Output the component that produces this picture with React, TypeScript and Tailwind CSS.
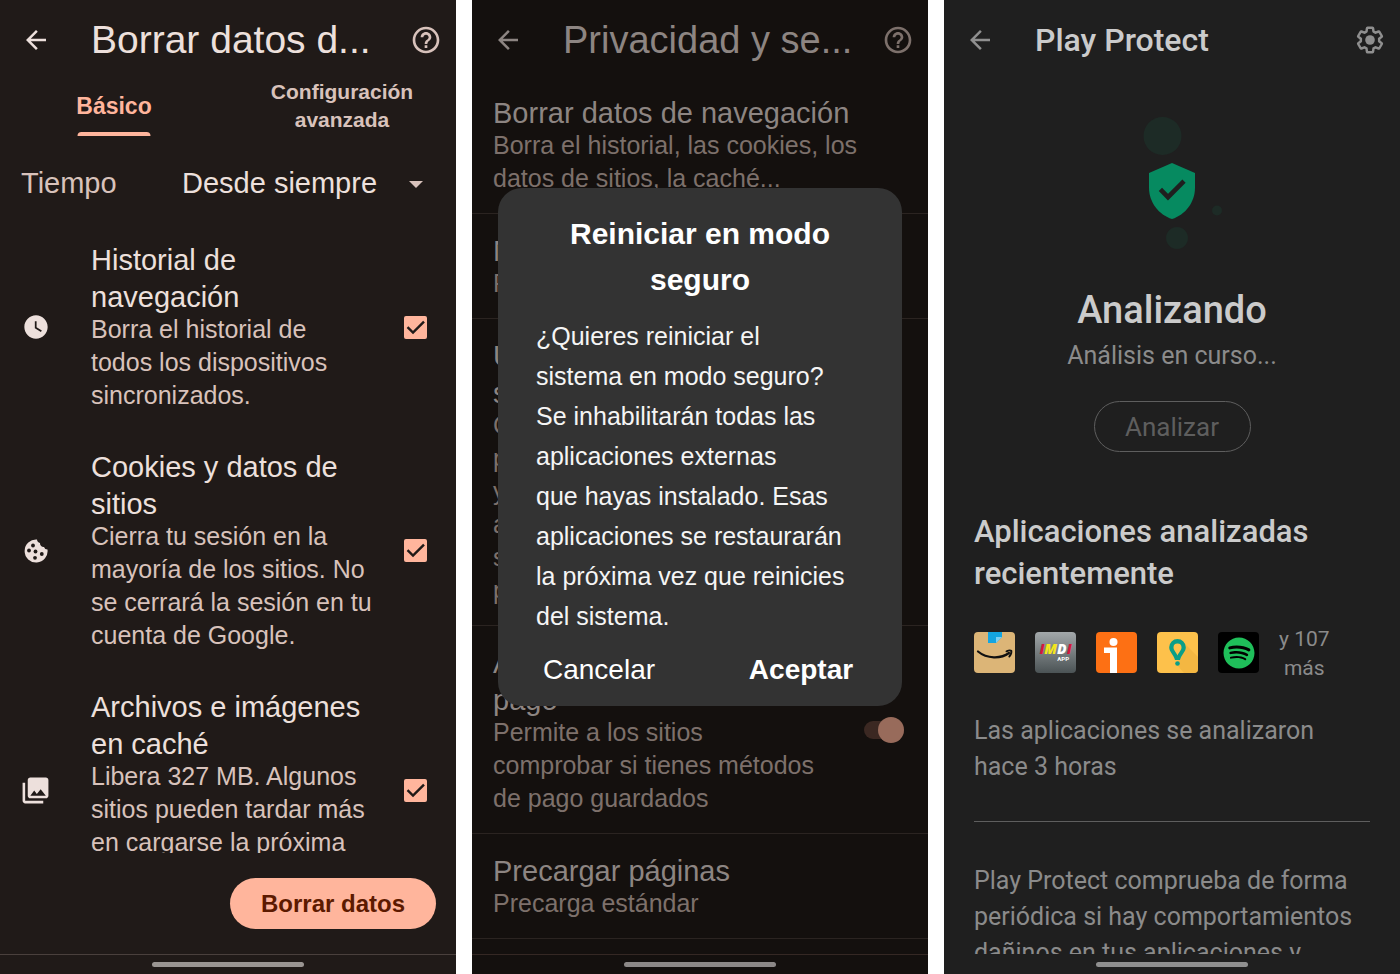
import { useId, useState } from 'react';
import type { ReactNode } from 'react';
import { MdArrowBack, MdHelpOutline, MdPhotoLibrary, MdWatchLater } from 'react-icons/md';
import { FaSpotify } from 'react-icons/fa';

const SANS = "font-['Liberation_Sans',Arial,sans-serif]";
const ROBOTO = "font-['Roboto',sans-serif]";

interface ClearOption {
  id: string;
  title: string;
  text: string;
  icon: ReactNode;
}

function CookieIcon() {
  return (
    <svg viewBox="0 0 24 24" className="size-6" aria-hidden="true">
      <path
        fill="currentColor"
        d="M13 .6A11.500 11.500 0 1 0 23.500 10.500 3.600 3.600 0 0 1 20 8a3.700 3.700 0 0 1-4-4A3.700 3.700 0 0 1 13 .6z"
      />
      <g fill="#201a18">
        <circle cx="9" cy="6.500" r="1.900" />
        <circle cx="5" cy="11.500" r="1.900" />
        <circle cx="11.500" cy="12.500" r="1.900" />
        <circle cx="17.800" cy="15" r="1.900" />
        <circle cx="11" cy="18.800" r="1.900" />
      </g>
    </svg>
  );
}

const CLEAR_OPTIONS: ClearOption[] = [
  {
    id: 'history',
    title: 'Historial de\nnavegación',
    text: 'Borra el historial de\ntodos los dispositivos\nsincronizados.',
    icon: <MdWatchLater size={28} />,
  },
  {
    id: 'cookies',
    title: 'Cookies y datos de\nsitios',
    text: 'Cierra tu sesión en la\nmayoría de los sitios. No\nse cerrará la sesión en tu\ncuenta de Google.',
    icon: <CookieIcon />,
  },
  {
    id: 'cache',
    title: 'Archivos e imágenes\nen caché',
    text: 'Libera 327 MB. Algunos\nsitios pueden tardar más\nen cargarse la próxima\nvez que los visites.',
    icon: <MdPhotoLibrary size={31} />,
  },
];

function NavBar({ line, pill }: { line: string; pill: string }) {
  return (
    <div className={`h-5 shrink-0 border-t flex items-center justify-center ${line}`}>
      <span className={`w-[152px] h-[5px] rounded-full ${pill}`} />
    </div>
  );
}

function Header({ title, titleClass, color, action }: { title: string; titleClass: string; color: string; action: ReactNode }) {
  return (
    <header className={`h-[76px] shrink-0 pt-1 pl-[21px] pr-3.5 flex items-center ${color}`}>
      <button type="button" aria-label="Atrás" className="w-[70px] shrink-0">
        <MdArrowBack size={30} />
      </button>
      <h1 className={`flex-1 whitespace-nowrap ${titleClass}`}>{title}</h1>
      {action}
    </header>
  );
}

function HelpButton({ color }: { color: string }) {
  return (
    <button type="button" aria-label="Ayuda" className={color}>
      <MdHelpOutline size={32} />
    </button>
  );
}

function Tick({ checked, onChange, labelledBy }: { checked: boolean; onChange: () => void; labelledBy: string }) {
  return (
    <span className="grid size-[23px] shrink-0">
      <input
        type="checkbox"
        aria-labelledby={labelledBy}
        checked={checked}
        onChange={onChange}
        className="col-start-1 row-start-1 appearance-none size-[23px] rounded-xs border-2 border-[#ffb59c] checked:bg-[#ffb59c]"
      />
      {checked && (
        <svg viewBox="0 0 23 23" className="col-start-1 row-start-1 pointer-events-none" fill="none" stroke="#201a18" strokeWidth="2.4">
          <path d="M3.5 11.2 9 16.5 20 5.6" />
        </svg>
      )}
    </span>
  );
}

function ClearDataScreen() {
  const [checked, setChecked] = useState<Record<string, boolean>>({ history: true, cookies: true, cache: true });

  return (
    <section className={`min-w-0 flex flex-col overflow-hidden bg-[#201a18] ${SANS}`}>
      <Header
        title="Borrar datos d..."
        titleClass="text-[39px]"
        color="text-[#ede0dc]"
        action={<HelpButton color="text-[#d8c2bb]" />}
      />

      <div role="tablist" className="grid grid-cols-2 h-15 shrink-0 font-bold text-center">
        <button type="button" role="tab" aria-selected="true" className="relative text-[23px] text-[#ffb59c]">
          Básico
          <span className="absolute bottom-0 left-1/2 -translate-x-1/2 w-[73px] h-1 rounded-t-full bg-[#ffb59c]" />
        </button>
        <button type="button" role="tab" aria-selected="false" className="text-[21px]/[28px] text-[#d8c2bb]">
          Configuración<br />avanzada
        </button>
      </div>

      <div className="h-24 shrink-0 pl-[21px] pr-[33px] flex items-center text-[29px]">
        <label htmlFor="range" className="w-[161px] text-[#d8c2bb]">Tiempo</label>
        <div className="relative flex-1 flex items-center">
          <select id="range" className="appearance-none w-full bg-transparent text-[#ede0dc]">
            <option>Desde siempre</option>
            <option>Última hora</option>
            <option>Últimas 24 horas</option>
          </select>
          <svg viewBox="0 0 14 7" className="absolute right-0 w-3.5 h-[7px] pointer-events-none" fill="#d8c2bb">
            <path d="M0 0h14L7 7z" />
          </svg>
        </div>
      </div>

      <ul className="flex-1 min-h-0 overflow-hidden pt-2.5 flex flex-col gap-[37px]">
        {CLEAR_OPTIONS.map((o) => (
          <li key={o.id} className="shrink-0 flex items-center pr-[29px]">
            <span className="w-[91px] pr-5 shrink-0 flex justify-center text-[#ede0dc]">{o.icon}</span>
            <div className="flex-1 min-w-0 whitespace-pre-line">
              <h2 id={`opt-${o.id}`} className="text-[29px]/[37px] text-[#ede0dc]">{o.title}</h2>
              <p className="-mt-[3px] text-[25px]/[33px] text-[#d8c2bb]">{o.text}</p>
            </div>
            <Tick
              labelledBy={`opt-${o.id}`}
              checked={checked[o.id]}
              onChange={() => setChecked((prev) => ({ ...prev, [o.id]: !prev[o.id] }))}
            />
          </li>
        ))}
      </ul>

      <div className="h-[101px] shrink-0 pr-5 flex items-center justify-end">
        <button type="button" className="h-[51px] px-[31px] rounded-full bg-[#ffb59c] text-[24px] font-bold text-[#5c1a00]">
          Borrar datos
        </button>
      </div>
      <NavBar line="border-[#4a403d]" pill="bg-[#9a9592]" />
    </section>
  );
}

function Setting({ title, children, control }: { title: ReactNode; children: ReactNode; control?: ReactNode }) {
  return (
    <li className="shrink-0 pt-[19px] pb-[18px] px-[21px] border-b border-[#2b2421] flex items-center">
      <div className="flex-1">
        <h2 className="text-[29px]/[37px] text-[#8d8582]">{title}</h2>
        <p className="-mt-[3px] text-[25px]/[33px] text-[#7d706b]">{children}</p>
      </div>
      {control}
    </li>
  );
}

function SafeModeDialog() {
  return (
    <div className="absolute inset-0 pt-[188px] px-[26px]">
      <div role="dialog" aria-labelledby="safe-title" className="rounded-3xl bg-[#333333] pt-[23px] pb-4 text-white">
        <h2 id="safe-title" className="text-center text-[30px]/[46px] font-bold">
          Reiniciar en modo<br />seguro
        </h2>
        <p className="mt-[13px] pl-[38px] pr-6 text-[25px]/[40px] text-[#f5f5f5]">
          ¿Quieres reiniciar el<br />sistema en modo seguro?<br />Se inhabilitarán todas las<br />
          aplicaciones externas<br />que hayas instalado. Esas<br />aplicaciones se restaurarán<br />
          la próxima vez que reinicies<br />del sistema.
        </p>
        <div className="mt-3.5 grid grid-cols-2 text-[28px]/[40px]">
          <button type="button">Cancelar</button>
          <button type="button" className="font-bold">Aceptar</button>
        </div>
      </div>
    </div>
  );
}

function PrivacyScreen() {
  const [payments, setPayments] = useState(true);

  return (
    <section className={`relative min-w-0 flex flex-col overflow-hidden bg-[#14100e] ${SANS}`}>
      <Header
        title="Privacidad y se..."
        titleClass="text-[38px]"
        color="text-[#8d8582]"
        action={<HelpButton color="text-[#7d706b]" />}
      />
      <ul className="flex-1 min-h-0 overflow-hidden flex flex-col">
        <Setting title="Borrar datos de navegación">
          Borra el historial, las cookies, los<br />datos de sitios, la caché...
        </Setting>
        <Setting title="Navegación segura">Protección estándar</Setting>
        <Setting title={<>Usar siempre conexiones<br />seguras</>}>
          Cambia a HTTPS en las<br />páginas que visitas<br />y muestra un aviso<br />antes de cargar los<br />
          sitios que no estén<br />protegidos
        </Setting>
        <Setting
          title={<>Acceso a métodos de<br />pago</>}
          control={
            <input
              type="checkbox"
              role="switch"
              aria-label="Acceso a métodos de pago"
              checked={payments}
              onChange={() => setPayments(!payments)}
              className="appearance-none relative mr-[3px] w-10 h-[18px] rounded-full bg-[#3b2822] before:absolute before:-top-1 before:left-0 checked:before:left-3.5 before:size-[26px] before:rounded-full before:bg-[#986b5b]"
            />
          }
        >
          Permite a los sitios<br />comprobar si tienes métodos<br />de pago guardados
        </Setting>
        <Setting title="Precargar páginas">Precarga estándar</Setting>
      </ul>
      <NavBar line="border-[#352824]" pill="bg-[#8c8887]" />
      <SafeModeDialog />
    </section>
  );
}

function ShieldArt() {
  return (
    <svg viewBox="0 0 100 134" className="w-[100px] h-[134px]" aria-hidden="true">
      <g fill="#1d2b26">
        <circle cx="40.500" cy="19" r="19" />
        <circle cx="55" cy="121" r="11" />
        <circle cx="95" cy="93.500" r="5" />
      </g>
      <path fill="#068a60" d="M50 46 73 56v15c0 14-9.800 27-23 31-13.200-4-23-17-23-31V56z" />
      <path fill="none" stroke="#1f1f1f" strokeWidth="4.600" d="M38.400 72.400 46 80.200 62 64.200" />
    </svg>
  );
}

function GearIcon() {
  return (
    <svg viewBox="0 0 24 24" className="size-8" fill="none" aria-hidden="true">
      <path
        transform="translate(1 1) scale(.917)"
        stroke="currentColor"
        strokeWidth="2"
        strokeLinejoin="round"
        d="M19.430 12.980c.04-.32.07-.64.07-.98 0-.34-.03-.66-.07-.98l2.110-1.650c.19-.15.24-.42.12-.64l-2-3.460a.5.5 0 0 0-.61-.22l-2.490 1c-.52-.4-1.080-.73-1.690-.98l-.38-2.650A.488.488 0 0 0 14 2h-4c-.25 0-.46.18-.49.42l-.38 2.650c-.61.25-1.170.59-1.690.98l-2.490-1a.5.5 0 0 0-.61.22l-2 3.460c-.13.22-.07.49.12.64l2.110 1.650c-.04.32-.07.65-.07.98 0 .33.03.66.07.98l-2.110 1.650c-.19.15-.24.42-.12.64l2 3.460a.5.5 0 0 0 .61.22l2.490-1c.52.4 1.080.73 1.690.98l.38 2.650c.03.24.24.42.49.42h4c.25 0 .46-.18.49-.42l.38-2.650c.61-.25 1.170-.59 1.690-.98l2.490 1a.5.5 0 0 0 .61-.22l2-3.460c.12-.22.07-.49-.12-.64z"
      />
      <circle cx="12" cy="12" r="3.600" fill="currentColor" />
    </svg>
  );
}

const TILE = 'size-[41px] shrink-0 rounded-sm';

function ShopIcon() {
  return (
    <svg viewBox="0 0 41 41" className={`${TILE} bg-[#dcb577]`} role="img" aria-label="Amazon">
      <path fill="#14a5e0" d="M14 0h14v5l-6 6h-8z" />
      <path fill="#7fd0f2" d="M28 5l-6 6V5z" />
      <path fill="none" stroke="#111" strokeWidth="2.200" strokeLinecap="round" d="M4 19.500c9 7.500 23 7.500 31 1.500" />
      <path fill="none" stroke="#111" strokeWidth="1.900" strokeLinecap="round" strokeLinejoin="round" d="M32.500 19.300c2-.9 4-1.100 4.800-.5.400 1.700-.5 4-2 5.800" />
    </svg>
  );
}

function ImdiIcon() {
  const id = useId();
  return (
    <svg viewBox="0 0 41 41" className={TILE} role="img" aria-label="IMDI App">
      <linearGradient id={id} x1="0" y1="0" x2="0" y2="1">
        <stop offset="0" stopColor="#a3a8aa" />
        <stop offset="1" stopColor="#4b5355" />
      </linearGradient>
      <rect width="41" height="41" fill={`url(#${id})`} />
      <text x="20.500" y="21.500" textAnchor="middle" fontSize="14" fontWeight="800" fontStyle="italic" className="font-['Open_Sans',sans-serif]">
        <tspan fill="#d3173d">I</tspan>
        <tspan fill="#f3e61c">M</tspan>
        <tspan fill="#fff">D</tspan>
        <tspan fill="#d3173d">I</tspan>
      </text>
      <text x="34" y="29" textAnchor="end" fontSize="6" fontWeight="700" fill="#fff" className="font-['Roboto',sans-serif]">APP</text>
    </svg>
  );
}

function InfoIcon() {
  return (
    <svg viewBox="0 0 41 41" className={`${TILE} bg-[#fd7014]`} role="img" aria-label="Idealista" fill="#fff">
      <circle cx="17.500" cy="10" r="4" />
      <path d="M8 15.500h13V41h-7V21H8z" />
    </svg>
  );
}

function PinIcon() {
  return (
    <svg viewBox="0 0 41 41" className={`${TILE} bg-[#fdc14b]`} role="img" aria-label="Trips">
      <path fill="#eeb03c" d="M27 11 41 25v16H27l-7-8z" opacity=".6" />
      <path
        fill="#0a9e88"
        fillRule="evenodd"
        d="M20.500 7a8.300 8.300 0 0 0-8.300 8.300c0 4.600 4.300 7.200 5.800 12.700h5c1.500-5.500 5.800-8.100 5.800-12.700A8.300 8.300 0 0 0 20.500 7zm0 4.500a4 4 0 0 1 4 4c0 2.800-2.600 4.500-4 8-1.400-3.500-4-5.200-4-8a4 4 0 0 1 4-4z"
      />
      <circle cx="20.500" cy="31.500" r="2.300" fill="#0a9e88" />
    </svg>
  );
}

function PlayProtectScreen() {
  return (
    <section className={`min-w-0 flex flex-col overflow-hidden bg-[#1f1f1f] text-[#8b8b8b] ${ROBOTO}`}>
      <Header
        title="Play Protect"
        titleClass="text-[32px] font-medium text-[#cbcbcb]"
        color="text-[#8f8f8f]"
        action={
          <button type="button" aria-label="Ajustes">
            <GearIcon />
          </button>
        }
      />
      <div className="flex-1 min-h-0 overflow-hidden px-[30px] pt-[41px]">
        <div className="flex flex-col items-center">
          <ShieldArt />
          <h2 className="mt-[35px] text-[38px]/[48px] font-medium text-[#cbcbcb]">Analizando</h2>
          <p className="mt-1 text-[25px]/[36px]">Análisis en curso...</p>
          <button type="button" className="mt-[27px] h-[51px] w-[157px] pt-0.5 rounded-full border border-[#5e5e5e] text-[26px] text-[#5e5e5e]">
            Analizar
          </button>
        </div>

        <h2 className="mt-[59px] text-[31px]/[42px] font-medium text-[#cbcbcb]">
          Aplicaciones analizadas<br />recientemente
        </h2>
        <div className="mt-[30px] flex gap-5">
          <div className="pt-[7px] flex gap-5">
            <ShopIcon />
            <ImdiIcon />
            <InfoIcon />
            <PinIcon />
            <span className={`${TILE} bg-black text-[#1fbf5a] flex items-center justify-center`}>
              <FaSpotify size={32} />
            </span>
          </div>
          <p className="text-center text-[21px]/[29px]">y 107<br />más</p>
        </div>
        <p className="mt-[30px] text-[25px]/[36px]">Las aplicaciones se analizaron<br />hace 3 horas</p>
        <hr className="mt-9 border-[#5e5e5e]" />
        <p className="mt-[41px] text-[25px]/[36px] whitespace-nowrap">
          Play Protect comprueba de forma<br />periódica si hay comportamientos<br />dañinos en tus aplicaciones y
        </p>
      </div>
      <NavBar line="border-transparent" pill="bg-[#8f8f8f]" />
    </section>
  );
}

export default function App() {
  return (
    <main className="grid grid-cols-3 gap-4 h-screen bg-white">
      <ClearDataScreen />
      <PrivacyScreen />
      <PlayProtectScreen />
    </main>
  );
}
